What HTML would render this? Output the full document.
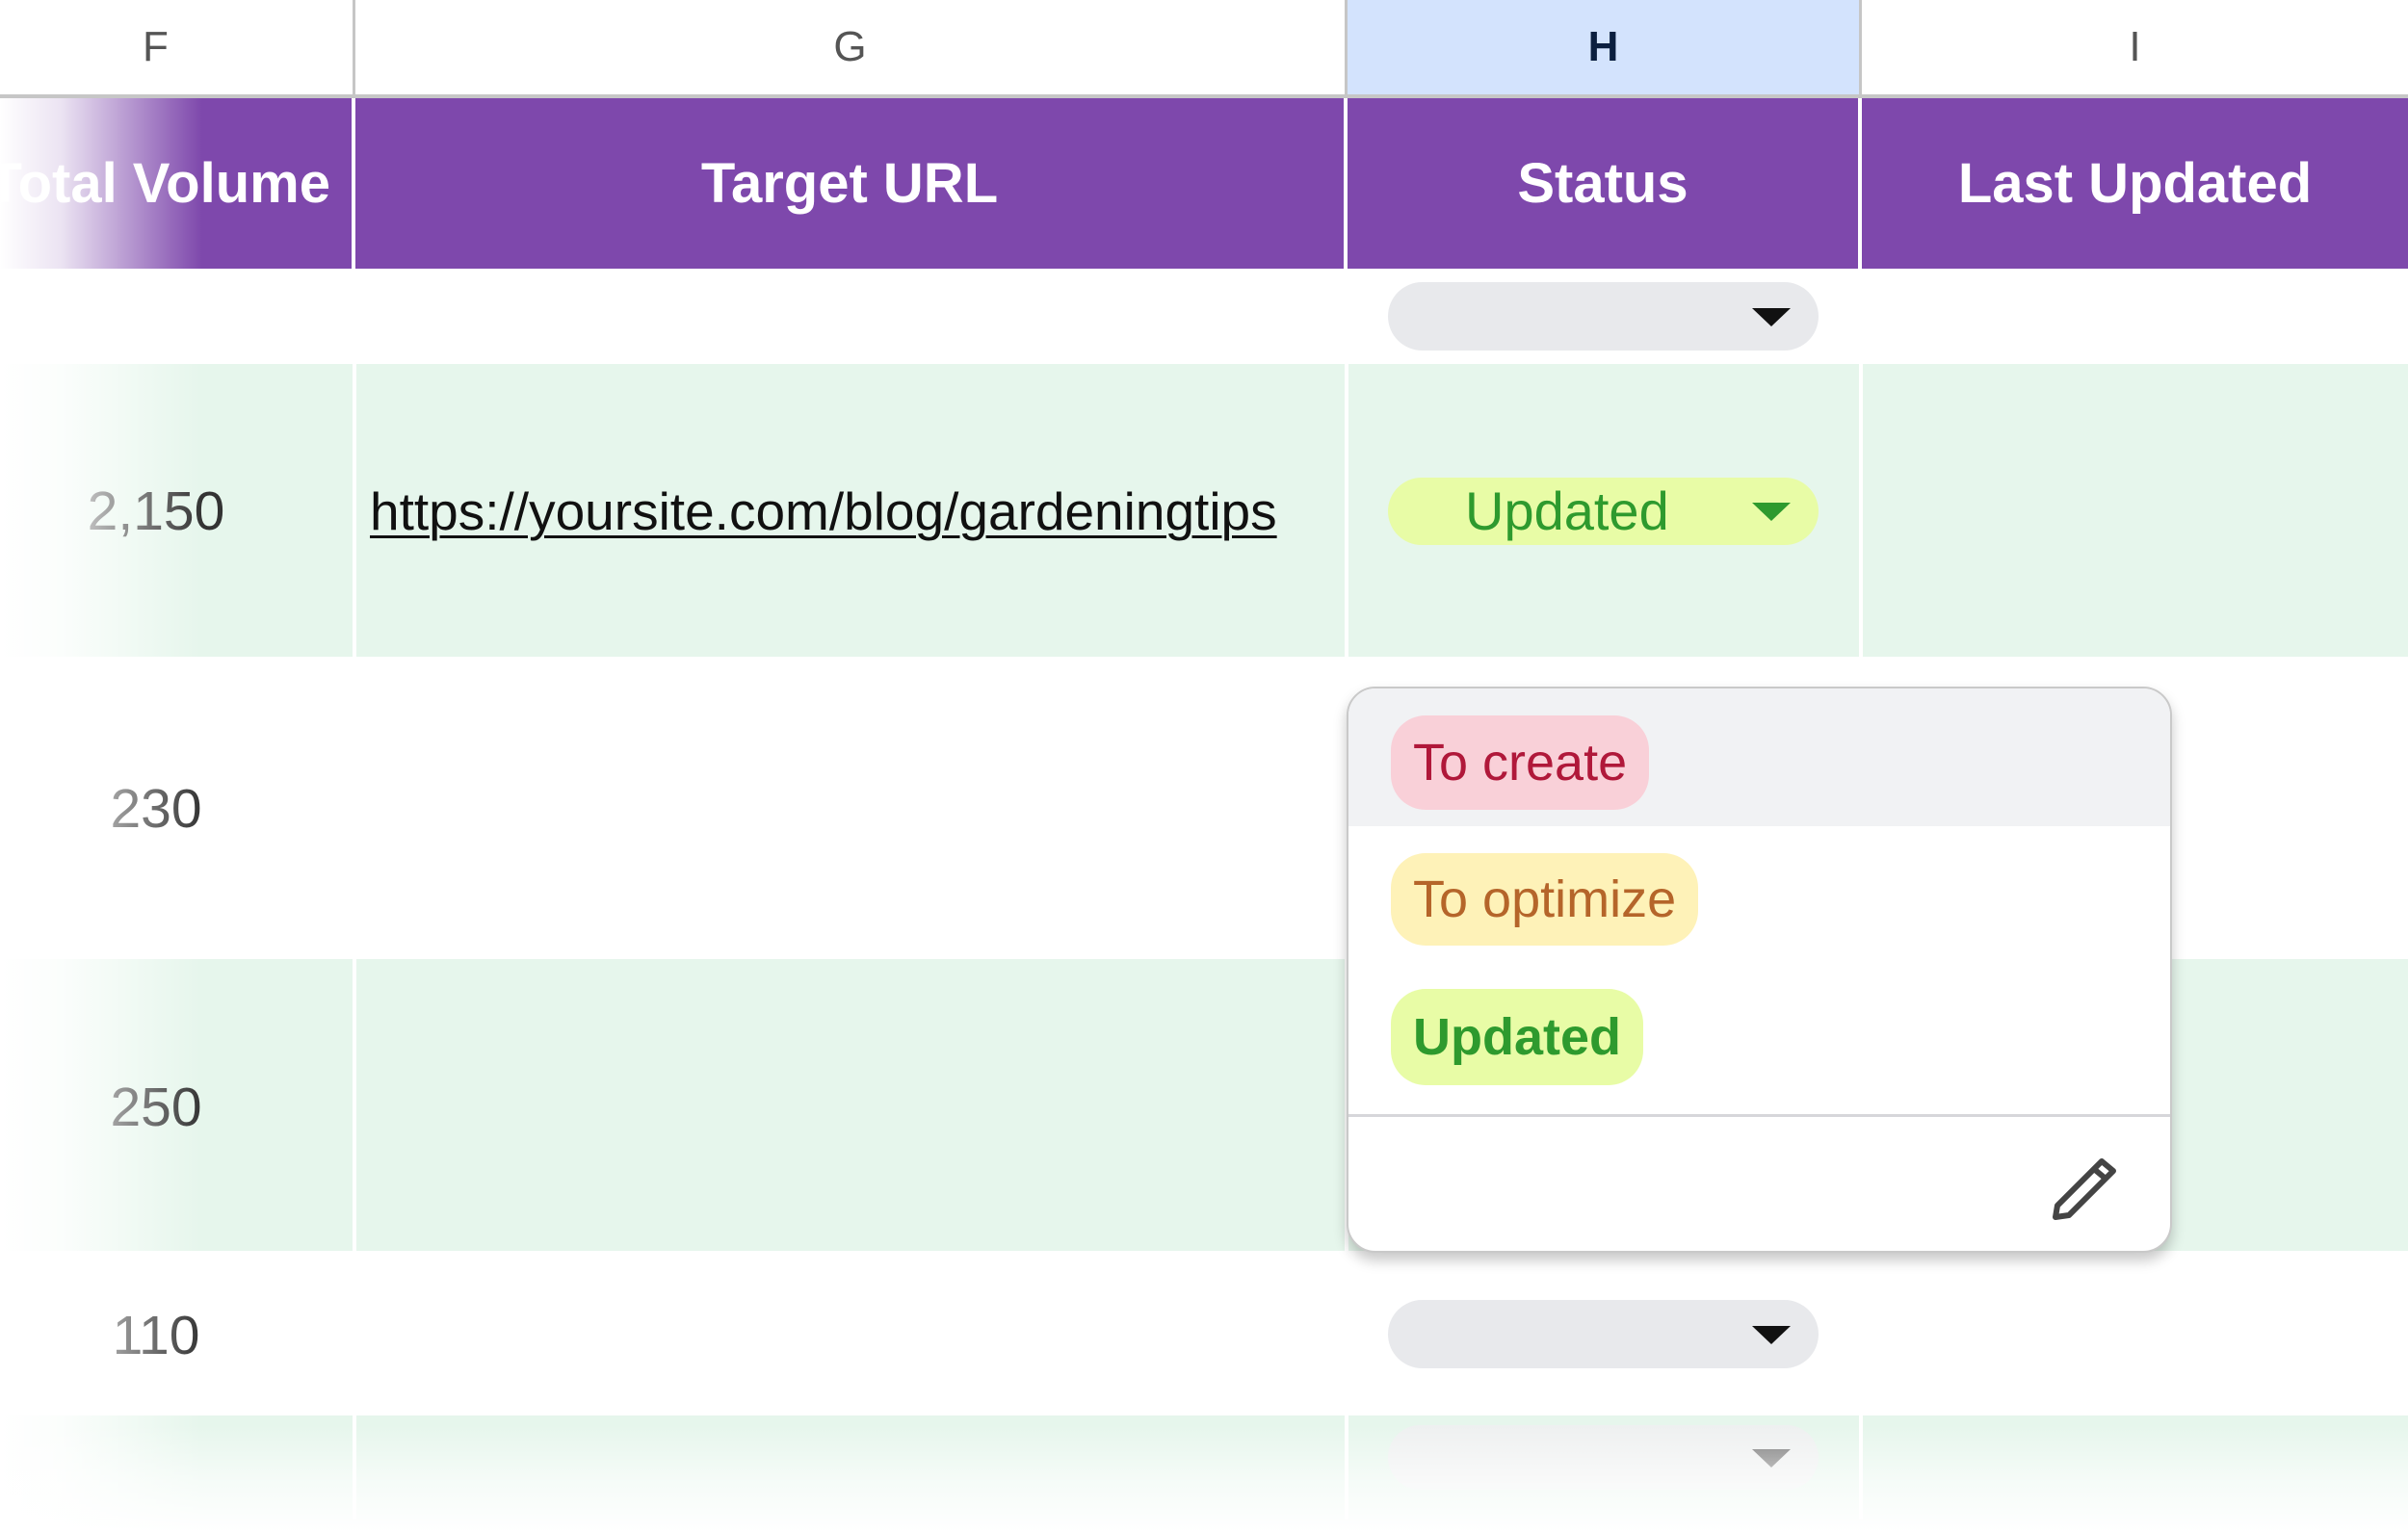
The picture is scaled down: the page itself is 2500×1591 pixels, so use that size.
<!DOCTYPE html>
<html><head><meta charset="utf-8"><style>
*{margin:0;padding:0;box-sizing:border-box}
body{width:2500px;height:1591px;overflow:hidden;background:#fff;font-family:"Liberation Sans",Arial,sans-serif;position:relative}
.abs{position:absolute}
.colhead{top:0;height:102px;border-bottom:4px solid #c6c6c6;border-right:3px solid #c6c6c6;display:flex;align-items:center;justify-content:center;font-size:44px;color:#555}
.ph{top:102px;height:177px;background:#7e48ac;color:#fff;font-weight:bold;font-size:58px;display:flex;align-items:center;justify-content:center;border-right:4px solid #fff}
.row{left:0;width:2500px}
.green{background:#e6f6ec}
.vline{top:378px;width:4px;height:1200px;background:#fff}
.num{font-size:57px;color:#333;width:324px;text-align:center}
.pill{left:1441px;width:447px;border-radius:36px;background:#e8e9ec}
.arrow{position:absolute;right:29px;top:50%;margin-top:-9px;width:0;height:0;border-left:20px solid transparent;border-right:20px solid transparent;border-top:19px solid #111}
.chip{position:absolute;left:1444px;border-radius:36px;font-size:54px;padding:0 23px;display:flex;align-items:center}
</style></head><body>
<div class="abs row green" style="top:378px;height:304px"></div>
<div class="abs row green" style="top:996px;height:303px"></div>
<div class="abs row green" style="top:1470px;height:121px"></div>
<div class="abs vline" style="left:366px"></div>
<div class="abs vline" style="left:1396px"></div>
<div class="abs vline" style="left:1930px"></div>

<div class="abs colhead" style="left:0;width:369px;justify-content:flex-start;padding-left:148px">F</div>
<div class="abs colhead" style="left:369px;width:1030px">G</div>
<div class="abs colhead" style="left:1399px;width:534px;background:#d3e3fd;color:#0b1f3f;font-weight:bold">H</div>
<div class="abs colhead" style="left:1933px;width:567px;border-right:none">I</div>

<div class="abs ph" style="left:0;width:369px;justify-content:flex-end;padding-right:22px;overflow:hidden;white-space:nowrap">Total Volume</div>
<div class="abs ph" style="left:369px;width:1030px">Target URL</div>
<div class="abs ph" style="left:1399px;width:534px">Status</div>
<div class="abs ph" style="left:1933px;width:567px;border-right:none">Last Updated</div>

<div class="abs pill" style="top:293px;height:71px"><div class="arrow"></div></div>

<div class="abs num" style="left:0;top:496px;line-height:70px">2,150</div>
<div class="abs" style="left:384px;top:496px;line-height:70px;font-size:55px;color:#111;text-decoration:underline;text-decoration-thickness:3px;text-underline-offset:6px">https://yoursite.com/blog/gardeningtips</div>
<div class="abs pill" style="top:496px;height:70px;background:#e8fca6;color:#2e9a2e;font-size:56px;line-height:70px;padding-left:80px">Updated<div class="arrow" style="border-top-color:#2e9a2e"></div></div>

<div class="abs num" style="left:0;top:805px;line-height:70px">230</div>
<div class="abs num" style="left:0;top:1115px;line-height:70px">250</div>
<div class="abs num" style="left:0;top:1352px;line-height:70px">110</div>

<div class="abs pill" style="top:1350px;height:71px"><div class="arrow"></div></div>
<div class="abs pill" style="top:1480px;height:67px;background:#eef0f0"><div class="arrow" style="border-top-color:#777"></div></div>

<div class="abs" style="left:1398px;top:713px;width:857px;height:588px;border:2px solid #c9c9c9;border-radius:30px;background:#fff;box-shadow:0 8px 14px rgba(0,0,0,.22);overflow:hidden">
 <div class="abs" style="left:0;top:0;width:100%;height:143px;background:#f1f2f4"></div>
 <div class="abs" style="left:0;top:442px;width:100%;height:3px;background:#d6d6da"></div>
 <svg class="abs" style="left:730px;top:487px" width="70" height="68" viewBox="0 0 70 68"><path d="M52 4 L64 14 L18 60 L4 62 L6 50 Z M44 12 L56 22" fill="none" stroke="#444" stroke-width="6" stroke-linejoin="round"/></svg>
</div>
<div class="chip" style="top:743px;height:98px;background:#f9d0d8;color:#b0183a">To create</div>
<div class="chip" style="top:886px;height:96px;background:#fef2b8;color:#b5652a">To optimize</div>
<div class="chip" style="top:1027px;height:100px;background:#e8fca6;color:#2e9a2e;font-weight:bold">Updated</div>

<div class="abs" style="left:0;top:102px;width:210px;height:1489px;background:linear-gradient(to right,#fff 0%,rgba(255,255,255,.85) 30%,rgba(255,255,255,0) 100%)"></div>
<div class="abs" style="left:0;top:1480px;width:2500px;height:111px;background:linear-gradient(to bottom,rgba(255,255,255,0),rgba(255,255,255,.6) 50%,#fff)"></div>
</body></html>
